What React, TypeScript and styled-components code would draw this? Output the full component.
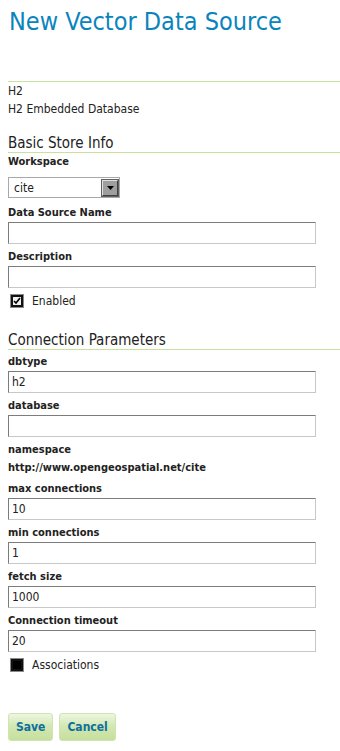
import styled, { createGlobalStyle } from 'styled-components';

const GlobalStyle = createGlobalStyle`
  html, body {
    margin: 0;
    padding: 0;
    background: #ffffff;
  }
  body {
    font-family: "DejaVu Sans Condensed", "DejaVu Sans", sans-serif;
    font-stretch: condensed;
    color: #222222;
    font-size: 12px;
  }
`;

const Page = styled.div`
  width: 340px;
  padding-left: 8px;
  box-sizing: border-box;
`;

const Header = styled.div`
  padding-top: 7px;
  height: 74px;
  border-bottom: 1px solid #c8e1a0;
`;

const Title = styled.h1`
  margin: 0 0 0 1px;
  font-size: 25px;
  line-height: 30px;
  font-weight: normal;
  color: #0a84bd;
`;

const InfoLine = styled.div`
  line-height: 18px;
  font-size: 12px;
`;

const Section = styled.h2<{ $top: number }>`
  margin: ${(p) => p.$top}px 0 0;
  font-size: 15px;
  line-height: 18px;
  font-weight: normal;
  color: #222222;
  border-bottom: 1px solid #c8e1a0;
`;

const Label = styled.div<{ $top?: number }>`
  margin-top: ${(p) => p.$top ?? 0}px;
  font-size: 11px;
  line-height: 18px;
  font-weight: bold;
`;

const Value = styled.div`
  font-size: 11px;
  line-height: 18px;
  font-weight: bold;
  margin-bottom: 3px;
`;

const TextInput = styled.input`
  display: block;
  box-sizing: border-box;
  width: 308px;
  height: 22px;
  margin: 0 0 4px;
  padding: 0 3px;
  border-style: solid;
  border-width: 1px;
  border-color: #7c7c7c #c8c8c8 #c8c8c8 #7c7c7c;
  font-family: inherit;
  font-stretch: condensed;
  font-size: 12px;
  color: #222222;
  outline: none;
`;

const Select = styled.div`
  display: flex;
  align-items: center;
  justify-content: space-between;
  box-sizing: border-box;
  width: 112px;
  height: 21px;
  margin: 6px 0 6px;
  padding: 0 1px 0 5px;
  border: 1px solid #a8a8a8;
  font-size: 12px;
`;

const ArrowBox = styled.span`
  display: flex;
  align-items: center;
  justify-content: center;
  box-sizing: border-box;
  width: 16px;
  height: 16px;
  background: #9e9e9e;
  border-style: solid;
  border-width: 1px;
  border-color: #e0e0e0 #404040 #404040 #e0e0e0;
  outline: 1px solid #606060;
`;

const CheckRow = styled.label<{ $top: number }>`
  display: flex;
  align-items: center;
  gap: 9px;
  margin-top: ${(p) => p.$top}px;
  padding-left: 3px;
  height: 18px;
  font-size: 12px;
`;

const Box = styled.span<{ $filled?: boolean }>`
  display: flex;
  align-items: center;
  justify-content: center;
  box-sizing: border-box;
  width: 12px;
  height: 12px;
  border: 2px solid #111111;
  outline: 1px solid #8a8a8a;
  background: ${(p) => (p.$filled ? '#000000' : '#f0f0f0')};
`;

const Buttons = styled.div`
  display: flex;
  gap: 6px;
  margin-top: 39px;
`;

const Button = styled.button`
  box-sizing: border-box;
  height: 28px;
  padding: 0 7px;
  border: 1px solid #cfe5ae;
  border-radius: 3px;
  background: linear-gradient(#eef6e3 0%, #d3e8b3 45%, #c6df9d 100%);
  font-family: inherit;
  font-stretch: condensed;
  font-size: 12px;
  font-weight: bold;
  color: #0d6f9f;
  cursor: pointer;
`;

const Check = () => (
  <svg width="8" height="8" viewBox="0 0 8 8">
    <path d="M1 4 L3 6 L7 1" stroke="#000" strokeWidth="1.6" fill="none" />
  </svg>
);

const App = () => {
  return (
    <Page>
      <GlobalStyle />
      <Header>
        <Title>New Vector Data Source</Title>
      </Header>
      <InfoLine>H2</InfoLine>
      <InfoLine>H2 Embedded Database</InfoLine>

      <Section $top={16}>Basic Store Info</Section>
      <Label>Workspace</Label>
      <Select>
        <span>cite</span>
        <ArrowBox>
          <svg width="7" height="4" viewBox="0 0 7 4">
            <path d="M0 0 H7 L3.5 4 Z" fill="#000" />
          </svg>
        </ArrowBox>
      </Select>
      <Label>Data Source Name</Label>
      <TextInput defaultValue="" />
      <Label>Description</Label>
      <TextInput defaultValue="" />
      <CheckRow $top={2}>
        <Box>
          <Check />
        </Box>
        Enabled
      </CheckRow>

      <Section $top={21}>Connection Parameters</Section>
      <Label $top={3}>dbtype</Label>
      <TextInput defaultValue="h2" />
      <Label>database</Label>
      <TextInput defaultValue="" />
      <Label>namespace</Label>
      <Value>http://www.opengeospatial.net/cite</Value>
      <Label>max connections</Label>
      <TextInput defaultValue="10" />
      <Label>min connections</Label>
      <TextInput defaultValue="1" />
      <Label>fetch size</Label>
      <TextInput defaultValue="1000" />
      <Label>Connection timeout</Label>
      <TextInput defaultValue="20" />
      <CheckRow $top={1}>
        <Box $filled />
        Associations
      </CheckRow>

      <Buttons>
        <Button>Save</Button>
        <Button>Cancel</Button>
      </Buttons>
    </Page>
  );
};

export default App;
